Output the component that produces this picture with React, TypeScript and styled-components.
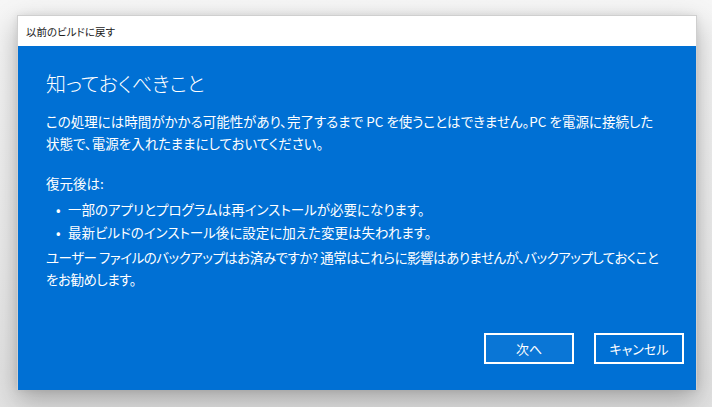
import React from 'react'
import styled, { createGlobalStyle } from 'styled-components'

const GlobalStyle = createGlobalStyle`
html, body {
    margin: 0;
    padding: 0;
    background: #f1f1f1;
}
body {
    font-family: "Noto Sans CJK JP", "Noto Sans", sans-serif;
    font-feature-settings: "palt";
}
`

const Stage = styled.div`
width: 712px;
height: 407px;
padding: 15px 0 0 17px;
box-sizing: border-box;
overflow: hidden;
background: linear-gradient(to bottom, #f6f6f6 0%, #ececec 60%, #e2e2e2 100%);
`

const Window = styled.div`
width: 680px;
height: 375px;
display: flex;
flex-direction: column;
border: 1px solid #cfcfcf;
border-bottom: 0;
box-sizing: border-box;
box-shadow: 0 10px 26px rgba(0, 0, 0, 0.28), 0 0 8px rgba(0, 0, 0, 0.08);
`

const TitleBar = styled.div`
height: 30px;
flex: none;
display: flex;
align-items: center;
padding-left: 8px;
background: #fff;
color: #1a1a1a;
font-size: 10.5px;
`

const Body = styled.div`
flex: 1;
display: flex;
flex-direction: column;
padding: 23px 12px 26px 28px;
background: #0070d4;
color: #fff;
`

const Heading = styled.h1`
margin: 0;
font-size: 20px;
line-height: 30px;
font-weight: 300;
`

const Text = styled.p<{ gap?: number; tight?: boolean }>`
margin: ${p => p.gap ?? 0}px 0 0;
font-size: 13.5px;
line-height: 22px;
letter-spacing: ${p => (p.tight ? '-0.5px' : 'normal')};
padding-right: 20px;
`

const List = styled.ul`
list-style: none;
margin: 4px 0 0;
padding: 0;
`

const Item = styled.li`
display: flex;
align-items: center;
font-size: 13.5px;
line-height: 23px;
padding-left: 10px;
&::before{
    content: '•';
    width: 12px;
    flex: none;
}
`

const Actions = styled.div`
margin-top: auto;
display: flex;
justify-content: flex-end;
gap: 20px;
`

const Button = styled.button<{ primary?: boolean }>`
width: 90px;
height: 31px;
box-sizing: border-box;
border: 2px solid #fff;
background: ${p => (p.primary ? '#0a76d6' : 'transparent')};
color: #fff;
font-family: inherit;
font-feature-settings: "palt";
font-size: 13px;
padding: 0;
cursor: pointer;
`

export default function App() {
  return (
    <>
      <GlobalStyle />
      <Stage>
        <Window>
          <TitleBar>以前のビルドに戻す</TitleBar>
          <Body>
            <Heading>知っておくべきこと</Heading>
            <Text gap={11}>
              この処理には時間がかかる可能性があり、完了するまで PC を使うことはできません。PC を電源に接続した状態で、電源を入れたままにしておいてください。
            </Text>
            <Text gap={18}>復元後は:</Text>
            <List>
              <Item>一部のアプリとプログラムは再インストールが必要になります。</Item>
              <Item>最新ビルドのインストール後に設定に加えた変更は失われます。</Item>
            </List>
            <Text gap={2} tight>
              ユーザー ファイルのバックアップはお済みですか? 通常はこれらに影響はありませんが、バックアップしておくことをお勧めします。
            </Text>
            <Actions>
              <Button primary>次へ</Button>
              <Button>キャンセル</Button>
            </Actions>
          </Body>
        </Window>
      </Stage>
    </>
  )
}
